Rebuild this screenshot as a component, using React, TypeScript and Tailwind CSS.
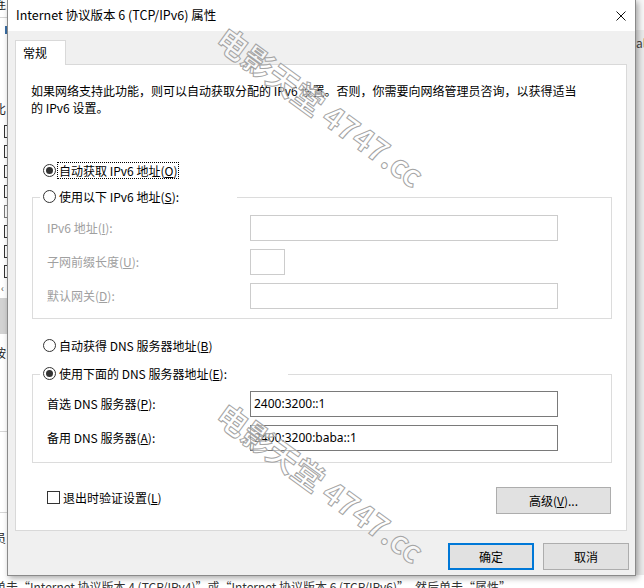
import React from "react";

function RadioDot({ checked }: { checked?: boolean }) {
  return (
    <span className="flex h-[13px] w-[13px] shrink-0 items-center justify-center rounded-full border border-[#333333] bg-white">
      {checked ? <span className="h-[7px] w-[7px] rounded-full bg-[#333333]" /> : null}
    </span>
  );
}

function Radio({ checked, focus, children }: { checked?: boolean; focus?: boolean; children: React.ReactNode }) {
  return (
    <div className="flex h-[18px] items-center">
      <RadioDot checked={checked} />
      {focus ? (
        <span className="ml-[1px] border border-dotted border-black px-[1px] leading-[15px] whitespace-nowrap">{children}</span>
      ) : (
        <span className="ml-[3px] leading-[17px] whitespace-nowrap">{children}</span>
      )}
    </div>
  );
}

function Row({ label, value, disabled, narrow }: { label: React.ReactNode; value?: string; disabled?: boolean; narrow?: boolean }) {
  return (
    <div className="flex h-[26px] items-center">
      <span className={`ml-[14px] w-[203px] whitespace-nowrap ${disabled ? "text-[#a0a0a0]" : "text-black"}`}>{label}</span>
      <div
        className={`flex h-[26px] items-center bg-white pl-[3px] font-['Noto_Sans','Noto_Sans_CJK_SC',sans-serif] text-[12px] text-black ${narrow ? "w-[35px]" : "w-[308px]"} border ${disabled ? "border-[#cccccc]" : "border-[#7a7a7a]"}`}
      >
        {value}
      </div>
    </div>
  );
}

function Button({ children, primary, wide }: { children: React.ReactNode; primary?: boolean; wide?: boolean }) {
  return (
    <div
      className={`flex h-[27px] items-center justify-center bg-[#e1e1e1] text-black ${wide ? "w-[115px]" : "w-[86px]"} ${primary ? "border-2 border-[#0078d7]" : "border border-[#adadad]"}`}
    >
      {children}
    </div>
  );
}

function Watermark({ top }: { top: string }) {
  return (
    <div
      className={`pointer-events-none absolute left-[321px] ${top} -translate-x-1/2 -translate-y-1/2 rotate-[36deg] whitespace-nowrap font-['Noto_Sans_CJK_SC',sans-serif] text-[31px] font-bold leading-none text-white/50 [-webkit-text-stroke:1px_#a4a4a4]`}
    >
      电影天堂 4747.cc
    </div>
  );
}

export default function App() {
  return (
    <div className="relative h-[588px] w-[644px] overflow-hidden bg-[#ececec] font-['Noto_Sans_CJK_SC','Noto_Sans',sans-serif] text-[12px] text-black">
      {/* background window: left strip */}
      <div className="absolute left-0 top-0 flex h-[588px] w-[7px] flex-col overflow-hidden bg-white">
        <div className="-ml-[6px] -mt-[5px] h-[17px] leading-[17px] text-[#222]">连</div>
        <div className="mt-[5px] h-px bg-[#d6d6d6]" />
        <div className="ml-[5px] mt-[8px] h-[8px] w-[2px] bg-[#3a6ea5]" />
        <div className="-ml-[6px] mt-[66px] h-[17px] leading-[17px] text-[#222]">比</div>
        <div className="mt-[8px] flex flex-col gap-[7px] pl-[4px]">
          <div className="h-[13px] w-[13px] border border-[#333] bg-white" />
          <div className="h-[13px] w-[13px] border border-[#333] bg-white" />
          <div className="h-[13px] w-[13px] border border-[#333] bg-white" />
          <div className="h-[13px] w-[13px] border border-[#333] bg-white" />
          <div className="h-[13px] w-[13px] border border-[#777] bg-white" />
          <div className="h-[13px] w-[13px] border border-[#333] bg-white" />
          <div className="h-[13px] w-[13px] border border-[#333] bg-white" />
          <div className="h-[13px] w-[13px] border border-[#333] bg-white" />
        </div>
        <div className="ml-[1px] mt-[4px] h-[12px] leading-[12px] text-[10px] text-[#555]">‹</div>
        <div className="mt-[4px] h-[36px] bg-[#d2d2d2]" />
        <div className="-ml-[6px] mt-[10px] h-[17px] leading-[17px] text-[#222]">按</div>
        <div className="mt-[70px] h-px bg-[#d6d6d6]" />
        <div className="mt-[80px] h-px bg-[#d6d6d6]" />
        <div className="-ml-[6px] mt-[16px] h-[17px] leading-[17px] text-[#222]">员</div>
      </div>

      {/* background window: right strip */}
      <div className="absolute right-0 top-0 flex h-[588px] w-[10px] flex-col bg-[#ebebeb]">
        <div className="h-[30px] bg-[#f7f7f7]" />
        <div className="ml-[2px] mt-[6px] leading-[14px] text-[12px] text-[#444]">al</div>
      </div>

      {/* background window: bottom text */}
      <div className="absolute left-[-6px] top-[575px] h-[13px] w-[700px] whitespace-nowrap bg-white pt-[4px] leading-[16px] text-[#333]">
        单击“Internet 协议版本 4 (TCP/IPv4)”或“Internet 协议版本 6 (TCP/IPv6)”，然后单击“属性”。
      </div>

      {/* dialog */}
      <div className="absolute left-[7px] top-0 flex h-[576px] w-[629px] flex-col border-x border-b border-[#8a8a8a] bg-[#f0f0f0] shadow-[2px_2px_6px_rgba(0,0,0,0.35)]">
        <div className="flex h-[31px] shrink-0 items-center justify-between bg-white pl-[8px] pr-[9px]">
          <span className="whitespace-nowrap text-[12.5px]">Internet 协议版本 6 (TCP/IPv6) 属性</span>
          <svg width="10" height="10" viewBox="0 0 10 10" className="block">
            <path d="M0.5 0.5 L9.5 9.5 M9.5 0.5 L0.5 9.5" stroke="#111" strokeWidth="1" fill="none" />
          </svg>
        </div>

        <div className="flex flex-col pl-[7px] pt-[9px]">
          <div className="relative z-10 -mb-px h-[25px] w-[51px] border border-b-0 border-[#d9d9d9] bg-white pl-[7px] pt-[3px] leading-[17px]">
            常规
          </div>
          <div className="flex h-[467px] w-[612px] flex-col border border-[#d9d9d9] bg-white pt-[17px]">
            <p className="ml-[15px] leading-[17px]">
              如果网络支持此功能，则可以自动获取分配的 IPv6 设置。否则，你需要向网络管理员咨询，以获得适当
              <br />
              的 IPv6 设置。
            </p>

            <div className="ml-[27px] mt-[45px]">
              <Radio checked focus>
                自动获取 IPv6 地址(<u>O</u>)
              </Radio>
            </div>

            <div className="ml-[16px] mt-[18px] w-[580px] border border-[#dcdcdc] pb-[9px]">
              <div className="-mt-[11px] ml-[7px] w-[197px] bg-white pl-[3px]">
                <Radio>
                  使用以下 IPv6 地址(<u>S</u>):
                </Radio>
              </div>
              <div className="mt-[10px] flex flex-col gap-[8px]">
                <Row disabled label={<>IPv6 地址(<u>I</u>):</>} />
                <Row disabled narrow label={<>子网前缀长度(<u>U</u>):</>} />
                <Row disabled label={<>默认网关(<u>D</u>):</>} />
              </div>
            </div>

            <div className="ml-[27px] mt-[17px]">
              <Radio>
                自动获得 DNS 服务器地址(<u>B</u>)
              </Radio>
            </div>

            <div className="ml-[16px] mt-[20px] w-[580px] border border-[#dcdcdc] pb-[11px]">
              <div className="-mt-[11px] ml-[7px] w-[248px] bg-white pl-[3px]">
                <Radio checked>
                  使用下面的 DNS 服务器地址(<u>E</u>):
                </Radio>
              </div>
              <div className="mt-[9px] flex flex-col gap-[8px]">
                <Row label={<>首选 DNS 服务器(<u>P</u>):</>} value="2400:3200::1" />
                <Row label={<>备用 DNS 服务器(<u>A</u>):</>} value="2400:3200:baba::1" />
              </div>
            </div>

            <div className="mt-[24px] flex items-start justify-between pl-[31px] pr-[15px]">
              <div className="mt-[1px] flex h-[18px] items-center">
                <span className="h-[13px] w-[13px] border border-[#333333] bg-white" />
                <span className="ml-[3px] leading-[17px]">
                  退出时验证设置(<u>L</u>)
                </span>
              </div>
              <Button wide>
                高级(<u>V</u>)...
              </Button>
            </div>
          </div>
        </div>

        <div className="mt-[12px] flex justify-end gap-[9px] pr-[6px]">
          <Button primary>确定</Button>
          <Button>取消</Button>
        </div>
      </div>

      <Watermark top="top-[106px]" />
      <Watermark top="top-[482px]" />
    </div>
  );
}
